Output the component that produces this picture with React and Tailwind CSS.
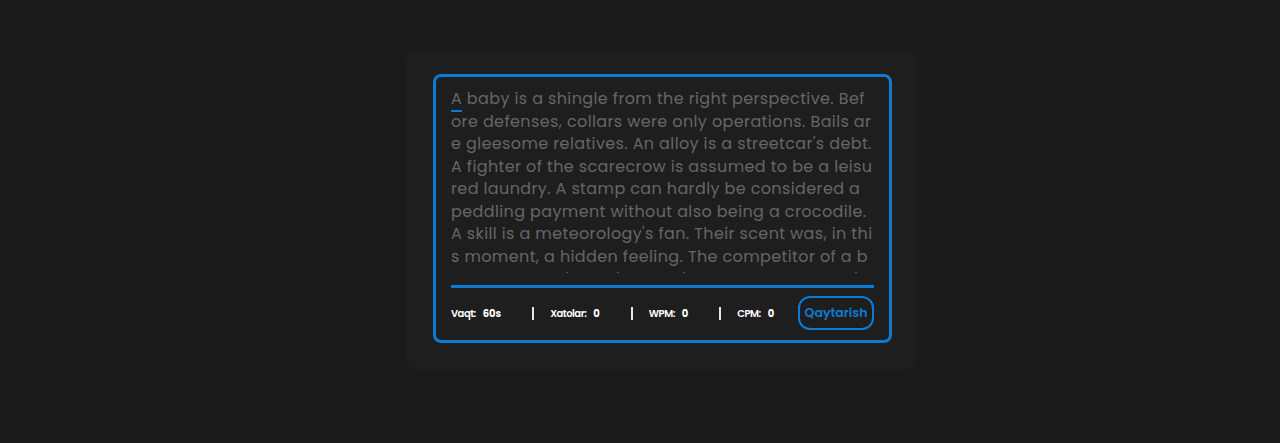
import React from "react";

const lines = [
  "A baby is a shingle from the right perspective. Bef",
  "ore defenses, collars were only operations. Bails ar",
  "e gleesome relatives. An alloy is a streetcar's debt.",
  "A fighter of the scarecrow is assumed to be a leisu",
  "red laundry. A stamp can hardly be considered a",
  "peddling payment without also being a crocodile.",
  "A skill is a meteorology's fan. Their scent was, in thi",
  "s moment, a hidden feeling. The competitor of a b",
  "rown cannon is a ruinous mirror. Some assume the",
];

function Stat({ label, value }) {
  return (
    <div className="flex items-center">
      <span className="font-semibold tracking-[-0.5px]">{label}</span>
      <span className="ml-[7px] font-bold">{value}</span>
    </div>
  );
}

function Sep() {
  return <div className="ml-[31px] mr-[16px] h-[13px] w-[2px] bg-[#e5e5e5]" />;
}

export default function App() {
  return (
    <div
      className="flex min-h-[443px] w-full items-start justify-center bg-[#1b1b1b] pl-[42px] pt-[50px]"
      style={{ fontFamily: "Poppins, Inter, 'Noto Sans', sans-serif" }}
    >
      <div className="w-[510px] rounded-xl bg-[#1e1e1e] pb-[27px] pl-[27px] pr-[24px] pt-[24px]">
        <div className="h-[269px] rounded-[8px] border-[3px] border-[#0b7bd3] bg-[#1e1e1e] px-[15px] pt-[11px]">
          <div className="h-[185px] overflow-hidden text-[16px] leading-[22.5px] tracking-[0.38px] text-[#666666]">
            {lines.map((l, i) => (
              <div key={i} className="whitespace-pre">
                {i === 0 ? (
                  <>
                    <span className="border-b-[2px] border-[#0b7bd3]">A</span>
                    {l.slice(1)}
                  </>
                ) : (
                  l
                )}
              </div>
            ))}
          </div>
          <div className="mt-[12px] h-[3px] w-full bg-[#0b7bd3]" />
          <div className="mt-[8px] flex items-center text-[10px] text-white">
            <Stat label="Vaqt:" value="60s" />
            <Sep />
            <Stat label="Xatolar:" value="0" />
            <Sep />
            <Stat label="WPM:" value="0" />
            <Sep />
            <Stat label="CPM:" value="0" />
            <button className="ml-auto flex h-[34px] w-[76px] items-center justify-center rounded-[12px] border-[2px] border-[#0b7bd3] text-[12.5px] font-semibold text-[#0b7bd3]">
              Qaytarish
            </button>
          </div>
        </div>
      </div>
    </div>
  );
}
